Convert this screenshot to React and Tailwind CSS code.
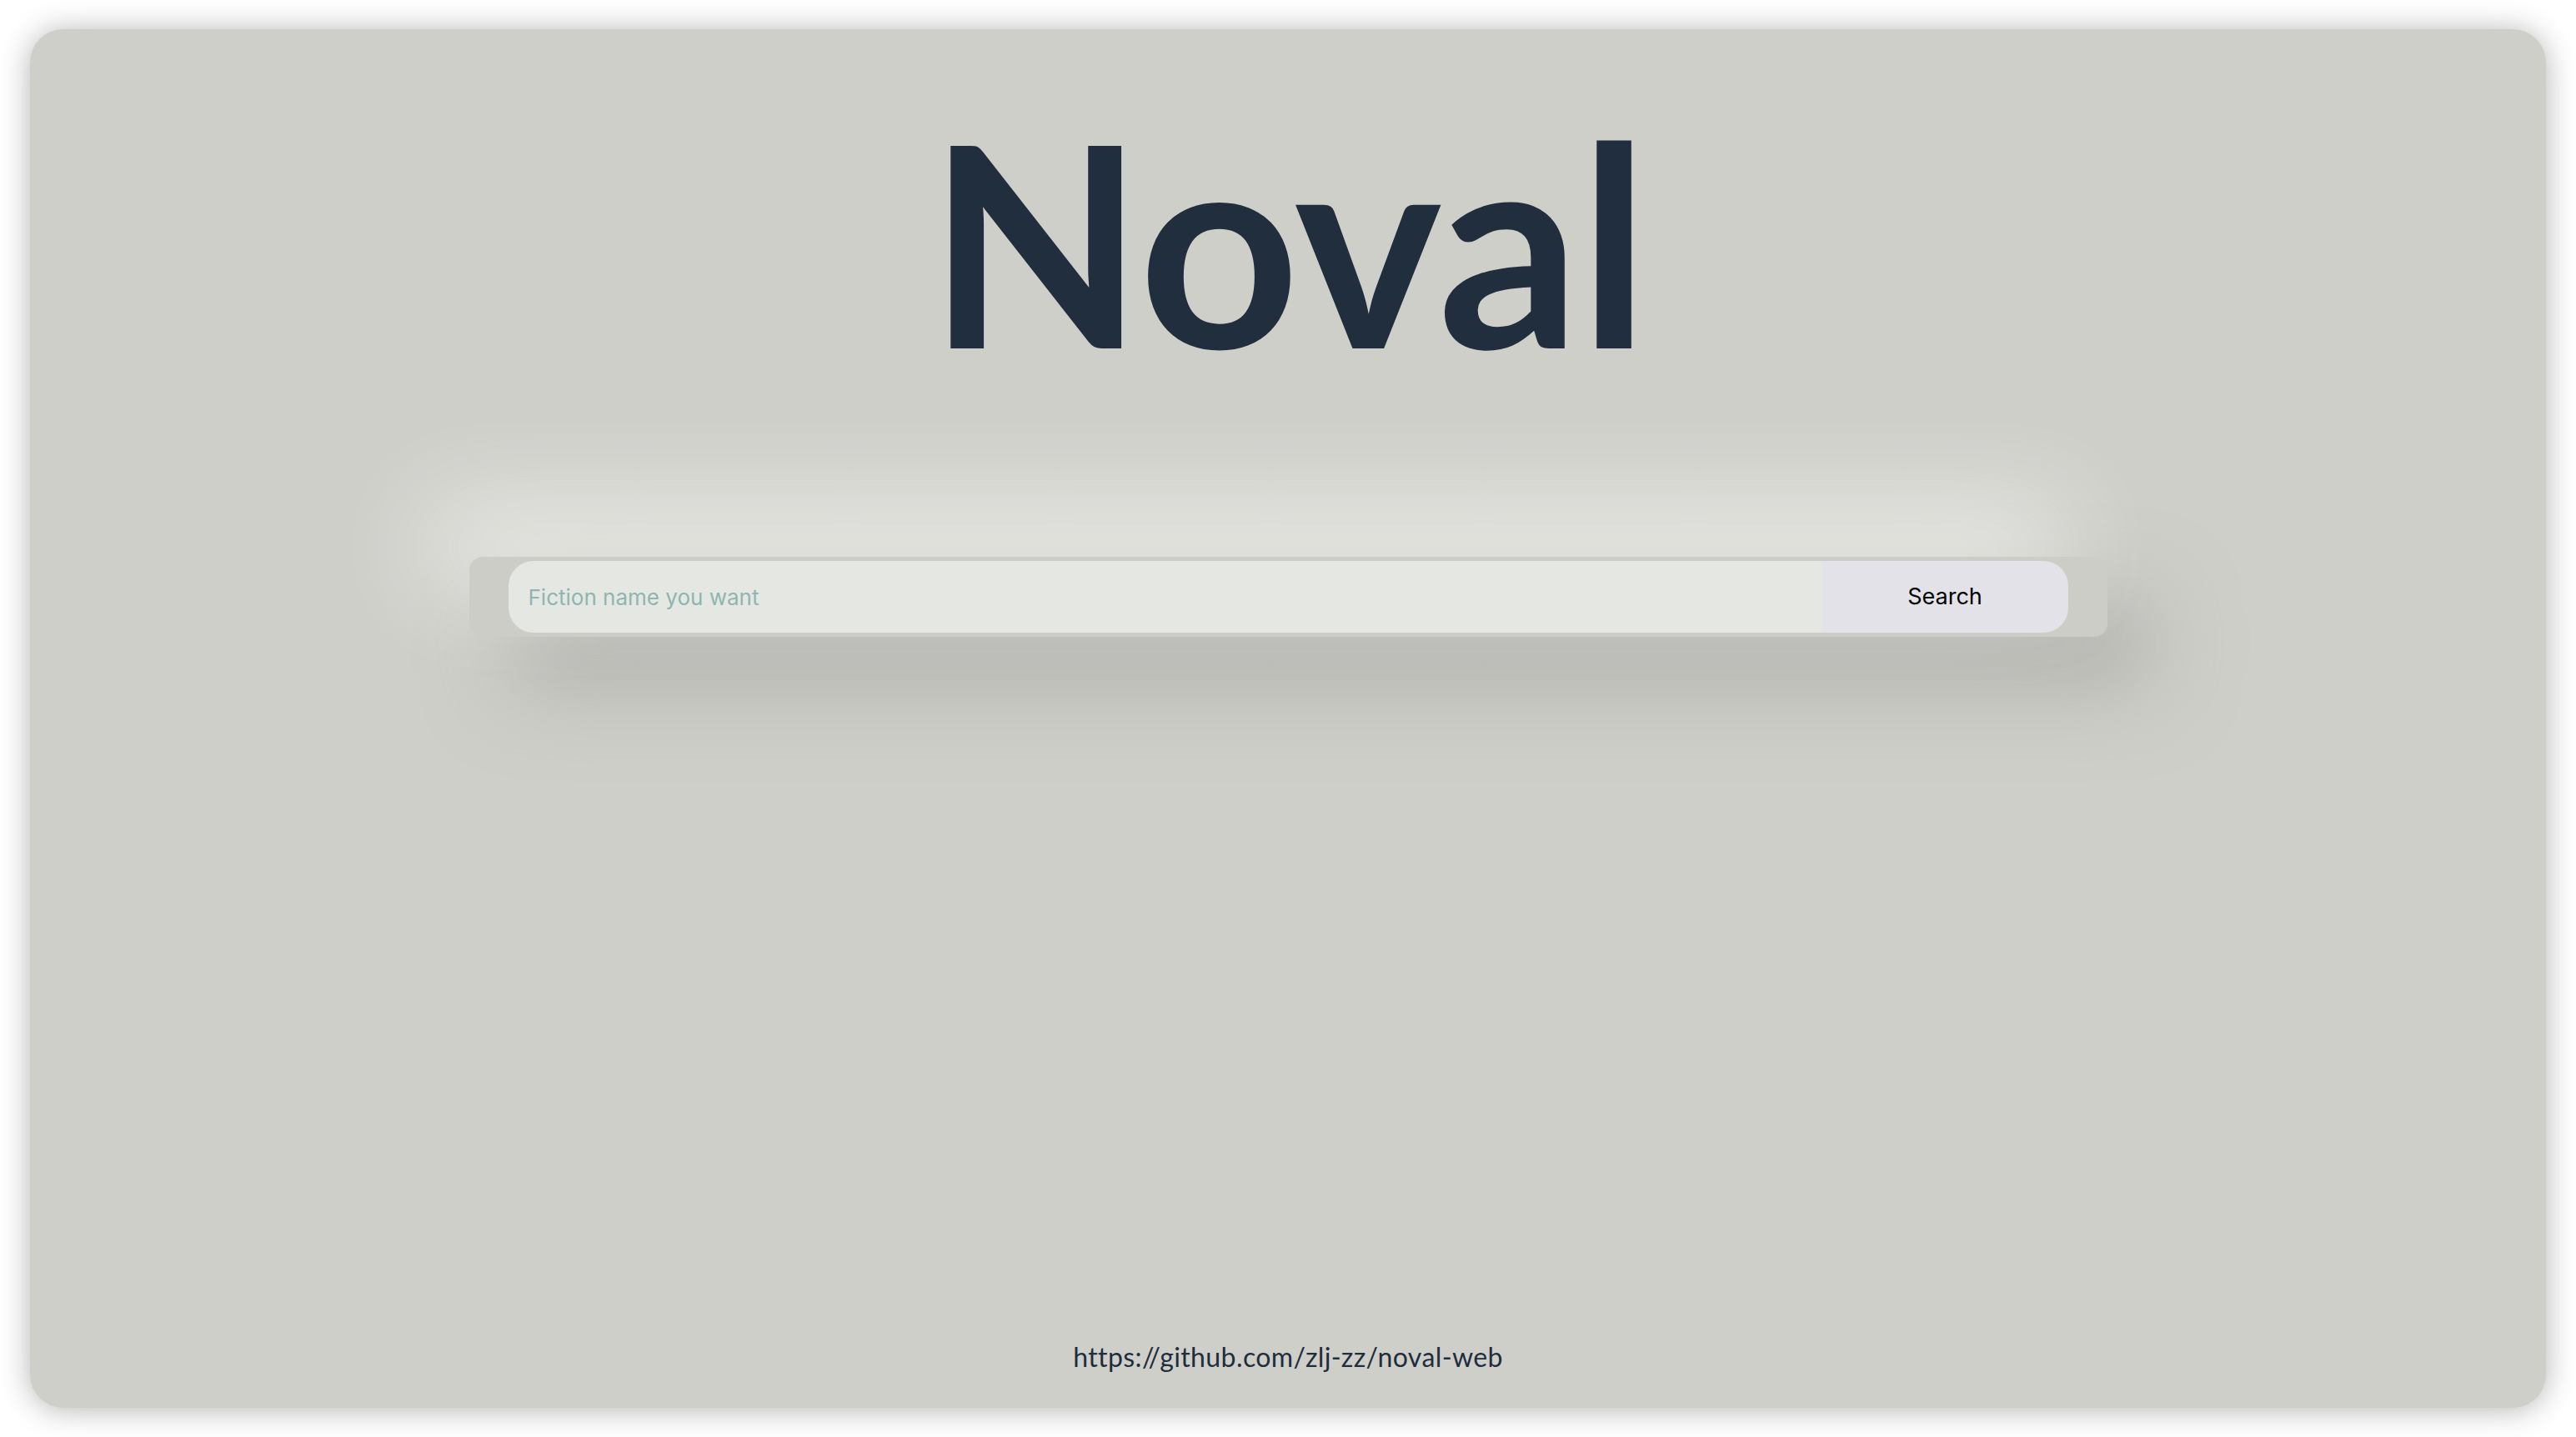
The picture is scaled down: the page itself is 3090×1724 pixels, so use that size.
function SearchBar() {
  return (
    <div className="flex w-[1965px] rounded-2xl bg-[#cdcdc8] px-[47px] py-[5px] shadow-[-50px_-60px_120px_rgba(240,240,236,0.9),50px_55px_100px_rgba(150,150,146,0.55)]">
      <input
        type="text"
        placeholder="Fiction name you want"
        className="h-[86px] flex-1 rounded-l-[30px] bg-[#e5e8e2] pl-6 text-[26px] text-[#1f2937] outline-none placeholder:text-[#8fb5b1] font-['Inter',sans-serif]"
      />
      <button
        type="button"
        className="h-[86px] w-[295px] rounded-r-[30px] bg-[#e3e2e8] text-[27px] text-black font-['Inter',sans-serif]"
      >
        Search
      </button>
    </div>
  )
}

export default function App() {
  return (
    <div className="h-[1724px] w-[3090px] bg-white px-[36px] py-[35px]">
      <div className="flex h-full flex-col items-center rounded-[40px] bg-[#cfcfca] pt-[85px] pb-[43px] shadow-[0_2px_36px_rgba(0,0,0,0.3)]">
        <h1 className="text-[336px] font-bold leading-none tracking-[-1px] text-[#212e3e] font-['Lato',sans-serif]">
          Noval
        </h1>

        <div className="mt-[212px]">
          <SearchBar />
        </div>

        <a
          href="https://github.com/zlj-zz/noval-web"
          className="mt-auto text-[32px] leading-9 tracking-[0.4px] text-[#1f2d3d] font-['Lato',sans-serif]"
        >
          https://github.com/zlj-zz/noval-web
        </a>
      </div>
    </div>
  )
}
